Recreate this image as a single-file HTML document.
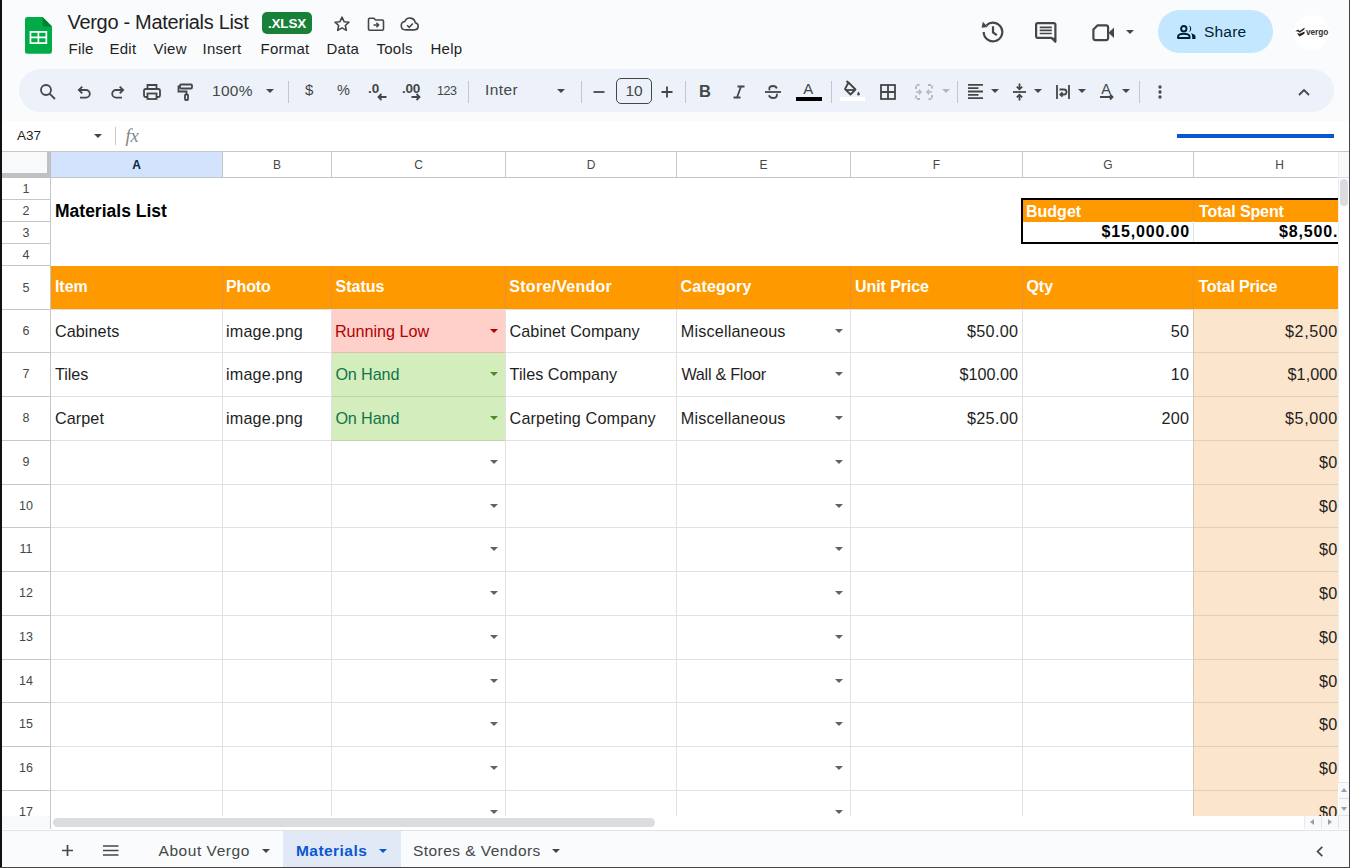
<!DOCTYPE html>
<html lang="en"><head><meta charset="utf-8"><title>Vergo - Materials List</title>
<style>
html,body{margin:0;padding:0}
body{width:1350px;height:868px;overflow:hidden;position:relative;background:#f9fbfd;font-family:"Liberation Sans",sans-serif;color:#1f1f1f}
body *{position:absolute;box-sizing:border-box;white-space:nowrap}
svg{overflow:visible}
/* ---------- header ---------- */
#doctitle{left:67.500px;top:9.700px;font-size:20px;line-height:24px;color:#1f1f1f;letter-spacing:-0.310px}
#badge{left:262px;top:11.700px;width:50px;height:22.700px;border-radius:5px;background:#188038;color:#fff;font-weight:700;font-size:13.500px;line-height:23px;text-align:center;letter-spacing:-0.2px}
.menu{top:39px;font-size:15px;line-height:20px;color:#1f1f1f;letter-spacing:0.250px;margin-left:0.500px}
#share{left:1158px;top:10px;width:115px;height:43px;border-radius:22px;background:#c2e7ff}
#share span{left:46px;top:0;line-height:43px;font-size:15.5px;color:#001d35;letter-spacing:0.2px}
#avatar{left:1294.400px;top:14.800px;width:35px;height:35px;border-radius:50%;background:#fff}
#avatar span{left:11.700px;top:11.800px;font-size:8.300px;line-height:10px;font-weight:700;color:#333;letter-spacing:-0.100px}
/* ---------- toolbar ---------- */
#tb{left:19px;top:69.400px;width:1315px;height:42.600px;border-radius:21.500px;background:#edf2fa}
.sep{top:81px;width:1px;height:22px;background:#c7c7c7}
.tbt{color:#444746;font-size:15px;line-height:20px;top:81px}
/* ---------- formula bar ---------- */
#fb{left:2px;top:121px;width:1347px;height:30px;background:#fff}
#fbline{left:2px;top:151px;width:1347px;height:1px;background:#c7c7c7}
/* ---------- grid ---------- */
#grid{left:0;top:0;width:1350px;height:830px}
#gridbg{left:2px;top:152px;width:1347px;height:678px;background:#fff}
.ch{top:152px;height:25px;line-height:27px;text-align:center;font-size:12px;color:#444746;background:#fff}
.ch.sel{background:#d3e3fd;color:#041e49;font-weight:700}
.rh{left:2px;width:48px;padding-top:0.500px;text-align:center;font-size:12.5px;color:#444746;background:#fff}
.vl{width:1px;background:#e1e1e1}
.hl{height:1px;background:#e1e1e1}
.vl.hd,.hl.hd{background:#c4c7c5}
.orow{background:#ff9900}
.vl.ov{background:#e69138}
.oh{color:#fff;font-weight:700;font-size:16px}
.tint{background:#fce5cd}
.hl.tl{background:#e3cfb9}
.c{font-size:16.200px;color:#1f1f1f}
.c.r{text-align:right}
.sbg.low{background:#ffcfc9}
.sbg.ok{background:#d4edbc}
.hl.lowl{background:#e6bab5}
.hl.okl{background:#bfd5a9}
.c.tlow{color:#b10202}
.c.tok{color:#11734b}
.dd{width:0;height:0;border-left:4px solid transparent;border-right:4px solid transparent;border-top:4.400px solid #5f6368}
.dd.dlow{border-top-color:#b10202}
.dd.dok{border-top-color:#4f8a2a}
.title{font-weight:700;font-size:17.500px;color:#000;margin-top:0.500px}
.bud{left:1021px;top:198px;width:317px;height:46px;overflow:hidden}
.bo{background:#ff9900}
.bt{color:#fff;font-weight:700;font-size:16px;line-height:22px}
.bv{color:#000;font-weight:700;font-size:16px;line-height:22px;letter-spacing:0.85px}
.bsep{width:1px}
.tab{top:840.500px;font-size:15.5px;line-height:20px;color:#444746;letter-spacing:0.45px}
</style></head><body>
<!-- ===== title bar ===== -->
<svg style="left:24.800px;top:17px" width="27" height="36.700" viewBox="0 0 27 36.700">
<path d="M2.500 0H17.600l9.400 9.400V34.200a2.500 2.500 0 0 1-2.500 2.500h-22A2.500 2.500 0 0 1 0 34.200v-31.700A2.500 2.500 0 0 1 2.500 0z" fill="#00ac47"/>
<path d="M17.600 0l9.400 9.400h-7.400a2 2 0 0 1-2-2z" fill="#00832d"/>
<path d="M4.600 14h17.600v13H4.600zM6.300 15.700v3.900h6.250v-3.900zM14.250 15.700v3.900h6.250v-3.900zM6.300 21.300v4h6.250v-4zM14.250 21.300v4h6.250v-4z" fill="#fff" fill-rule="evenodd"/>
</svg>
<div id="doctitle">Vergo - Materials List</div>
<div id="badge">.XLSX</div>
<!-- star -->
<svg style="left:331.700px;top:13.700px" width="20" height="20" viewBox="0 0 24 24"><path d="M12 3.800l2.500 5.400 5.900.600-4.400 4 1.200 5.800L12 16.600 6.800 19.600 8 13.800 3.600 9.800l5.900-.600z" fill="none" stroke="#444746" stroke-width="1.900" stroke-linejoin="round"/></svg>
<!-- move to folder -->
<svg style="left:365.700px;top:13.700px" width="20" height="20" viewBox="0 0 24 24"><path d="M3 6.500a1.500 1.500 0 0 1 1.500-1.500h5l2 2.200h8a1.500 1.500 0 0 1 1.500 1.500V18a1.500 1.500 0 0 1-1.500 1.500h-15A1.500 1.500 0 0 1 3 18z" fill="none" stroke="#444746" stroke-width="1.900" stroke-linejoin="round"/><path d="M9 13.300h5.500M12.500 10.600l2.700 2.700-2.700 2.700" fill="none" stroke="#444746" stroke-width="1.800"/></svg>
<!-- cloud done -->
<svg style="left:398.700px;top:13.700px" width="22" height="20" viewBox="0 0 26 24"><path d="M7.500 19a5 5 0 0 1-.700-9.950A6.500 6.500 0 0 1 19.300 10.500 4.300 4.300 0 0 1 19 19z" fill="none" stroke="#444746" stroke-width="1.900" stroke-linejoin="round"/><path d="M9.500 13.500l2.500 2.500 4.500-4.500" fill="none" stroke="#444746" stroke-width="1.800"/></svg>
<div class="menu" style="left:68px">File</div>
<div class="menu" style="left:109px">Edit</div>
<div class="menu" style="left:153px">View</div>
<div class="menu" style="left:202px">Insert</div>
<div class="menu" style="left:260px">Format</div>
<div class="menu" style="left:326px">Data</div>
<div class="menu" style="left:376px">Tools</div>
<div class="menu" style="left:430px">Help</div>
<!-- history -->
<svg style="left:979px;top:18.400px" width="28" height="28" viewBox="0 0 28 28"><path d="M4.700 14a9.300 9.300 0 1 0 2.800-6.650" fill="none" stroke="#444746" stroke-width="2.200"/><path d="M2.600 9.800l1.200-6 5 5.300z" fill="#444746"/><path d="M14 8.300v6.200l3.800 2.600" fill="none" stroke="#444746" stroke-width="2.200"/></svg>
<!-- comment -->
<svg style="left:1034.500px;top:22px" width="21.500" height="21" viewBox="0 0 21.500 21"><path d="M1.100 2.600A1.500 1.500 0 0 1 2.600 1.100h16.300A1.500 1.500 0 0 1 20.400 2.600v17.200l-4-4H2.600A1.500 1.500 0 0 1 1.100 14.300z" fill="none" stroke="#444746" stroke-width="2.200" stroke-linejoin="round"/><path d="M16.400 15.800l4 4v-4z" fill="#444746"/><path d="M4.700 5.300h12.100M4.700 8.400h12.100M4.700 11.500h12.100" stroke="#444746" stroke-width="1.700"/></svg>
<!-- camera -->
<svg style="left:1091px;top:23px" width="24" height="19" viewBox="0 0 24 19"><path d="M2.400 6.500l4-4.100h8.700a2 2 0 0 1 2 2v10.700a2 2 0 0 1-2 2H4.400a2 2 0 0 1-2-2z" fill="none" stroke="#444746" stroke-width="2.200" stroke-linejoin="round"/><path d="M17.500 9.800l5.500-5.300v10.600z" fill="#444746"/></svg>
<div class="dd" style="left:1126px;top:30px;border-top-color:#444746;border-left-width:4px;border-right-width:4px;border-top-width:4.500px"></div>
<div id="share"><svg style="left:18.500px;top:14.500px" width="19" height="14" viewBox="0 0 19 14"><circle cx="6.800" cy="3.700" r="2.700" fill="none" stroke="#001d35" stroke-width="1.900"/><path d="M1 13v-1.300c0-1.900 3.200-3 5.800-3s5.800 1.100 5.800 3V13z" fill="none" stroke="#001d35" stroke-width="1.900" stroke-linejoin="round"/><path d="M11.600 0.300a3.500 3.500 0 0 1 0 6.800 4.500 4.500 0 0 0 0-6.800zM14 8.300c2.300.500 4.500 1.500 4.500 3.300V14h-3.300v-2.300c0-1.400-.400-2.500-1.200-3.400z" fill="#001d35"/></svg><span>Share</span></div>
<div id="avatar"><svg style="left:0.500px;top:12.500px" width="10.500" height="10" viewBox="0 0 10.500 10"><path d="M0.300 4.200L3.200 2.600l1.500 1.500L9.700 0.400 9.300 2.600 4.800 5.700 3 4.500zM1.800 6.200l2.800.600L9.700 4.500 9.400 6.700 4.600 9.500z" fill="#222"/></svg><span>vergo</span></div>
<!-- ===== toolbar ===== -->
<div id="tb"></div>
<svg style="left:38px;top:81.6px" width="20" height="20" viewBox="0 0 20 20"><circle cx="8" cy="8" r="5" fill="none" stroke="#444746" stroke-width="1.8"/><path d="M11.800 11.800l5.200 5.200" fill="none" stroke="#444746" stroke-width="1.8" stroke-width="2"/></svg>
<svg style="left:74px;top:81.6px" width="20" height="20" viewBox="0 0 20 20"><path d="M5.500 8h6.500a3.800 3.800 0 0 1 0 7.600H6" fill="none" stroke="#444746" stroke-width="1.8"/><path d="M8.300 4.600L4.800 8l3.500 3.400" fill="none" stroke="#444746" stroke-width="1.8"/></svg>
<svg style="left:108px;top:81.6px" width="20" height="20" viewBox="0 0 20 20"><path d="M14.500 8H8a3.800 3.800 0 0 0 0 7.600h6" fill="none" stroke="#444746" stroke-width="1.8"/><path d="M11.700 4.600L15.200 8l-3.500 3.400" fill="none" stroke="#444746" stroke-width="1.8"/></svg>
<svg style="left:142px;top:81.6px" width="20" height="20" viewBox="0 0 20 20"><path d="M5.500 7V3h9v4" fill="none" stroke="#444746" stroke-width="1.8"/><rect x="2" y="7" width="16" height="8" rx="1.500" fill="none" stroke="#444746" stroke-width="1.8"/><rect x="5.500" y="11.500" width="9" height="5.500" fill="#edf2fa" stroke="#444746" stroke-width="1.800"/></svg>
<svg style="left:176px;top:81.6px" width="20" height="20" viewBox="0 0 20 20"><rect x="4" y="2.500" width="12" height="4" rx="1" fill="none" stroke="#444746" stroke-width="1.8"/><path d="M4 4.500H2.500v5h8v3" fill="none" stroke="#444746" stroke-width="1.8"/><rect x="9" y="12.500" width="3" height="5.500" rx="0.800" fill="none" stroke="#444746" stroke-width="1.8" stroke-width="1.600"/></svg>
<div class="tbt" style="left:212px;font-size:15.5px;letter-spacing:0.3px">100%</div>
<div class="dd" style="left:265.5px;top:89px;border-top-color:#444746"></div>
<div class="sep" style="left:288px"></div>
<div class="tbt" style="left:305px;top:80px;font-size:15px">$</div>
<div class="tbt" style="left:337px;top:80px;font-size:14.5px">%</div>
<div class="tbt" style="left:368px;top:78.500px;font-size:13.5px;font-weight:700">.0</div>
<svg style="left:377px;top:92.6px" width="10" height="8" viewBox="0 0 10 8"><path d="M9.500 4H1.500M4.500 1L1.500 4l3 3" fill="none" stroke="#444746" stroke-width="1.8" stroke-width="1.600"/></svg>
<div class="tbt" style="left:402px;top:78.500px;font-size:13.5px;font-weight:700;letter-spacing:-0.3px">.00</div>
<svg style="left:411px;top:92.6px" width="10" height="8" viewBox="0 0 10 8"><path d="M0.500 4H8.500M5.500 1L8.500 4l-3 3" fill="none" stroke="#444746" stroke-width="1.8" stroke-width="1.600"/></svg>
<div class="tbt" style="left:437px;font-size:12.500px;letter-spacing:-0.500px">123</div>
<div class="sep" style="left:468px"></div>
<div class="tbt" style="left:485px;top:80px;font-size:15.5px;letter-spacing:0.4px">Inter</div>
<div class="dd" style="left:556.5px;top:89px;border-top-color:#444746"></div>
<div class="sep" style="left:581px"></div>
<svg style="left:593px;top:85.6px" width="12" height="12" viewBox="0 0 12 12"><path d="M0.500 6h11" fill="none" stroke="#444746" stroke-width="1.8"/></svg>
<div style="left:616px;top:78px;width:36px;height:26px;border:1px solid #444746;border-radius:5px"></div>
<div class="tbt" style="left:616px;width:36px;text-align:center;top:81px;font-size:15.500px">10</div>
<svg style="left:661px;top:85.6px" width="12" height="12" viewBox="0 0 12 12"><path d="M0.500 6h11M6 0.500v11" fill="none" stroke="#444746" stroke-width="1.8"/></svg>
<div class="sep" style="left:685px"></div>
<div class="tbt" style="left:699px;top:80px;font-size:16.500px;font-weight:700;line-height:22px">B</div>
<svg style="left:732px;top:84.6px" width="14" height="14" viewBox="0 0 14 14"><path d="M5.500 1.500h7M1.500 12.500h7M9 1.500l-4 11" fill="none" stroke="#444746" stroke-width="1.8" stroke-width="2"/></svg>
<svg style="left:763px;top:81.6px" width="20" height="20" viewBox="0 0 20 20"><path d="M2 10h16" fill="none" stroke="#444746" stroke-width="1.8" stroke-width="1.600"/><path d="M13.800 6.500C13.300 4.800 11.800 4 10 4 7.800 4 6.300 5.200 6.300 6.800c0 .600.200 1.100.500 1.500M6 13.200c.400 1.700 2 2.800 4 2.800 2.300 0 3.900-1.200 3.900-3 0-.500-.100-.900-.300-1.200" fill="none" stroke="#444746" stroke-width="1.8"/></svg>
<div class="tbt" style="left:803.300px;top:79px;font-size:15px;line-height:20px">A</div>
<div style="left:796px;top:97px;width:26px;height:4px;background:#000"></div>
<div class="sep" style="left:831px"></div>
<svg style="left:841.7px;top:79.6px" width="20" height="18" viewBox="0 0 20 18"><path d="M6.500 2.500l7 7-5 5-5.500-5.500z" fill="none" stroke="#444746" stroke-width="1.8" stroke-linejoin="round"/><path d="M4 10h9" fill="none" stroke="#444746" stroke-width="1.8"/><path d="M4.500 1l2.500 2.500" fill="none" stroke="#444746" stroke-width="1.8"/><path d="M16.500 11.500c.800 1.200 1.300 2 1.300 2.700a1.300 1.300 0 0 1-2.600 0c0-.700.500-1.500 1.300-2.700z" fill="#444746"/></svg>
<div style="left:840px;top:97px;width:25px;height:4px;background:#fff"></div>
<svg style="left:880px;top:83.6px" width="16" height="16" viewBox="0 0 16 16"><rect x="1" y="1" width="14" height="14" fill="none" stroke="#444746" stroke-width="1.8"/><path d="M8 1v14M1 8h14" fill="none" stroke="#444746" stroke-width="1.8"/></svg>
<svg style="left:915px;top:83.6px" width="18" height="16" viewBox="0 0 18 16"><path d="M1 5V1h4M13 1h4v4M17 11v4h-4M5 15H1v-4" fill="none" stroke="#b4b7ba" stroke-width="1.800" stroke-dasharray="3 1.500"/><path d="M1 8h5M3.800 5.800L6 8l-2.200 2.200M17 8h-5M14.200 5.800L12 8l2.200 2.200" fill="none" stroke="#b4b7ba" stroke-width="1.600"/></svg>
<div class="dd" style="left:941.5px;top:89px;border-top-color:#b4b7ba"></div>
<div class="sep" style="left:957px"></div>
<svg style="left:967.8px;top:83.7px" width="15" height="15" viewBox="0 0 15 15"><path d="M0 0.800h15M0 4.150h10.500M0 7.500h15M0 10.850h10.500M0 14.200h15" fill="none" stroke="#444746" stroke-width="1.8" stroke-width="1.500"/></svg>
<div class="dd" style="left:990.5px;top:89px;border-top-color:#444746"></div>
<svg style="left:1012.8px;top:82.6px" width="13" height="18" viewBox="0 0 13 18"><path d="M0 9h13" fill="none" stroke="#444746" stroke-width="1.8" stroke-width="1.600"/><path d="M6.500 0.500v5.500M3.800 3.600L6.500 6.300l2.700-2.700M6.500 17.500v-5.500M3.800 14.400L6.500 11.700l2.700 2.700" fill="none" stroke="#444746" stroke-width="1.8" stroke-width="1.600"/></svg>
<div class="dd" style="left:1033.5px;top:89px;border-top-color:#444746"></div>
<svg style="left:1056px;top:84.6px" width="14" height="14" viewBox="0 0 14 14"><path d="M1 0v14M13 0v14" fill="none" stroke="#444746" stroke-width="1.8" stroke-width="1.700"/><path d="M3.500 4.500h4.500a2.500 2.500 0 0 1 0 5H4.500M6.500 7.300L4.300 9.500l2.200 2.200" fill="none" stroke="#444746" stroke-width="1.8" stroke-width="1.500"/></svg>
<div class="dd" style="left:1077.5px;top:89px;border-top-color:#444746"></div>
<div class="tbt" style="left:1101.200px;top:79px;font-size:14.500px;line-height:20px">A</div>
<svg style="left:1100px;top:93.6px" width="14" height="6" viewBox="0 0 14 6"><path d="M0 3h12.500M10 0.500L12.500 3l-2.500 2.500" fill="none" stroke="#444746" stroke-width="1.8" stroke-width="1.500"/></svg>
<div class="dd" style="left:1121.5px;top:89px;border-top-color:#444746"></div>
<div class="sep" style="left:1139px"></div>
<svg style="left:1158.3px;top:85px" width="4" height="14" viewBox="0 0 4 14"><circle cx="2" cy="2" r="1.650" fill="#444746"/><circle cx="2" cy="7" r="1.650" fill="#444746"/><circle cx="2" cy="12" r="1.650" fill="#444746"/></svg>
<svg style="left:1297.8px;top:87.8px" width="12" height="8" viewBox="0 0 12 8"><path d="M1 7l5-5 5 5" fill="none" stroke="#444746" stroke-width="1.8" stroke-width="1.900"/></svg>
<!-- ===== formula bar ===== -->
<div id="fb"></div><div id="fbline"></div>
<div style="left:17px;top:125.500px;font-size:13.500px;line-height:20px;color:#1f1f1f">A37</div>
<div class="dd" style="left:93.500px;top:134px;border-top-color:#444746;border-left-width:4.500px;border-right-width:4.500px;border-top-width:4.500px"></div>
<div style="left:115px;top:127px;width:1px;height:18px;background:#c7c7c7"></div>
<div style="left:125.500px;top:125px;font-family:'Liberation Serif',serif;font-style:italic;font-size:18.500px;line-height:22px;color:#80868b;letter-spacing:-0.200px">fx</div>
<div style="left:1177px;top:133.800px;width:157px;height:4.200px;background:#0b57d0"></div>
<div id="gridbg"></div>
<!-- corner -->
<div style="left:2px;top:152px;width:48px;height:25px;background:#f8f9fa"></div>
<div style="left:47px;top:152px;width:4px;height:26px;background:#bdc1c6"></div>
<div style="left:2px;top:173px;width:49px;height:5px;background:#bdc1c6"></div>
<div class="hl hd" style="left:51px;top:177px;width:1287px"></div>
<div class="vl hd" style="left:50px;top:178px;height:651px"></div>
<div id="grid">
<div class="ch sel" style="left:51px;width:171px">A</div>
<div class="vl hd" style="left:222px;top:152px;height:25px"></div>
<div class="ch" style="left:223px;width:108px">B</div>
<div class="vl hd" style="left:331px;top:152px;height:25px"></div>
<div class="ch" style="left:332px;width:173px">C</div>
<div class="vl hd" style="left:505px;top:152px;height:25px"></div>
<div class="ch" style="left:506px;width:170px">D</div>
<div class="vl hd" style="left:676px;top:152px;height:25px"></div>
<div class="ch" style="left:677px;width:173px">E</div>
<div class="vl hd" style="left:850px;top:152px;height:25px"></div>
<div class="ch" style="left:851px;width:171px">F</div>
<div class="vl hd" style="left:1022px;top:152px;height:25px"></div>
<div class="ch" style="left:1023px;width:170px">G</div>
<div class="vl hd" style="left:1193px;top:152px;height:25px"></div>
<div class="ch" style="left:1194px;width:171px">H</div>
<div class="vl hd" style="left:1365px;top:152px;height:25px"></div>
<div class="rh" style="top:178px;height:21px;line-height:21px">1</div>
<div class="hl hd" style="top:199px;left:2px;width:48px"></div>
<div class="rh" style="top:200px;height:21px;line-height:21px">2</div>
<div class="hl hd" style="top:221px;left:2px;width:48px"></div>
<div class="rh" style="top:222px;height:21px;line-height:21px">3</div>
<div class="hl hd" style="top:243px;left:2px;width:48px"></div>
<div class="rh" style="top:244px;height:21px;line-height:21px">4</div>
<div class="hl hd" style="top:265px;left:2px;width:48px"></div>
<div class="rh" style="top:266px;height:43px;line-height:43px">5</div>
<div class="hl hd" style="top:309px;left:2px;width:48px"></div>
<div class="rh" style="top:310px;height:42px;line-height:40px">6</div>
<div class="hl hd" style="top:352px;left:2px;width:48px"></div>
<div class="rh" style="top:353px;height:43px;line-height:41px">7</div>
<div class="hl hd" style="top:396px;left:2px;width:48px"></div>
<div class="rh" style="top:397px;height:43px;line-height:41px">8</div>
<div class="hl hd" style="top:440px;left:2px;width:48px"></div>
<div class="rh" style="top:441px;height:43px;line-height:41px">9</div>
<div class="hl hd" style="top:484px;left:2px;width:48px"></div>
<div class="rh" style="top:485px;height:42px;line-height:40px">10</div>
<div class="hl hd" style="top:527px;left:2px;width:48px"></div>
<div class="rh" style="top:528px;height:43px;line-height:41px">11</div>
<div class="hl hd" style="top:571px;left:2px;width:48px"></div>
<div class="rh" style="top:572px;height:43px;line-height:41px">12</div>
<div class="hl hd" style="top:615px;left:2px;width:48px"></div>
<div class="rh" style="top:616px;height:43px;line-height:41px">13</div>
<div class="hl hd" style="top:659px;left:2px;width:48px"></div>
<div class="rh" style="top:660px;height:42px;line-height:40px">14</div>
<div class="hl hd" style="top:702px;left:2px;width:48px"></div>
<div class="rh" style="top:703px;height:43px;line-height:41px">15</div>
<div class="hl hd" style="top:746px;left:2px;width:48px"></div>
<div class="rh" style="top:747px;height:43px;line-height:41px">16</div>
<div class="hl hd" style="top:790px;left:2px;width:48px"></div>
<div class="rh" style="top:791px;height:43px;line-height:41px">17</div>
<div class="hl hd" style="top:834px;left:2px;width:48px"></div>
<div class="hl" style="top:309px;left:51px;width:1287px"></div>
<div class="hl" style="top:352px;left:51px;width:1287px"></div>
<div class="hl" style="top:396px;left:51px;width:1287px"></div>
<div class="hl" style="top:440px;left:51px;width:1287px"></div>
<div class="hl" style="top:484px;left:51px;width:1287px"></div>
<div class="hl" style="top:527px;left:51px;width:1287px"></div>
<div class="hl" style="top:571px;left:51px;width:1287px"></div>
<div class="hl" style="top:615px;left:51px;width:1287px"></div>
<div class="hl" style="top:659px;left:51px;width:1287px"></div>
<div class="hl" style="top:702px;left:51px;width:1287px"></div>
<div class="hl" style="top:746px;left:51px;width:1287px"></div>
<div class="hl" style="top:790px;left:51px;width:1287px"></div>
<div class="hl" style="top:834px;left:51px;width:1287px"></div>
<div class="vl" style="left:222px;top:309px;height:520px"></div>
<div class="vl" style="left:331px;top:309px;height:520px"></div>
<div class="vl" style="left:505px;top:309px;height:520px"></div>
<div class="vl" style="left:676px;top:309px;height:520px"></div>
<div class="vl" style="left:850px;top:309px;height:520px"></div>
<div class="vl" style="left:1022px;top:309px;height:520px"></div>
<div class="vl" style="left:1193px;top:309px;height:520px;background:#dcc8b3"></div>
<div class="orow" style="top:266px;height:43px;left:51px;width:1287px"></div>
<div class="oh" style="left:54.9px;top:265px;height:44px;line-height:44px;letter-spacing:0px">Item</div>
<div class="oh" style="left:225.9px;top:265px;height:44px;line-height:44px;letter-spacing:-0.1px">Photo</div>
<div class="vl ov" style="left:222px;top:266px;height:43px"></div>
<div class="oh" style="left:335.5px;top:265px;height:44px;line-height:44px;letter-spacing:0px">Status</div>
<div class="vl ov" style="left:331px;top:266px;height:43px"></div>
<div class="oh" style="left:509.3px;top:265px;height:44px;line-height:44px;letter-spacing:0.27px">Store/Vendor</div>
<div class="vl ov" style="left:505px;top:266px;height:43px"></div>
<div class="oh" style="left:680.6px;top:265px;height:44px;line-height:44px;letter-spacing:0.2px">Category</div>
<div class="vl ov" style="left:676px;top:266px;height:43px"></div>
<div class="oh" style="left:855.1px;top:265px;height:44px;line-height:44px;letter-spacing:-0.1px">Unit Price</div>
<div class="vl ov" style="left:850px;top:266px;height:43px"></div>
<div class="oh" style="left:1026.4px;top:265px;height:44px;line-height:44px;letter-spacing:0px">Qty</div>
<div class="vl ov" style="left:1022px;top:266px;height:43px"></div>
<div class="oh" style="left:1198.4px;top:265px;height:44px;line-height:44px;letter-spacing:-0.15px">Total Price</div>
<div class="vl ov" style="left:1193px;top:266px;height:43px"></div>
<div class="tint" style="left:1194px;top:309px;width:144px;height:520px"></div>
<div class="hl tl" style="top:352px;left:1194px;width:144px"></div>
<div class="hl tl" style="top:396px;left:1194px;width:144px"></div>
<div class="hl tl" style="top:440px;left:1194px;width:144px"></div>
<div class="hl tl" style="top:484px;left:1194px;width:144px"></div>
<div class="hl tl" style="top:527px;left:1194px;width:144px"></div>
<div class="hl tl" style="top:571px;left:1194px;width:144px"></div>
<div class="hl tl" style="top:615px;left:1194px;width:144px"></div>
<div class="hl tl" style="top:659px;left:1194px;width:144px"></div>
<div class="hl tl" style="top:702px;left:1194px;width:144px"></div>
<div class="hl tl" style="top:746px;left:1194px;width:144px"></div>
<div class="hl tl" style="top:790px;left:1194px;width:144px"></div>
<div class="hl tl" style="top:834px;left:1194px;width:144px"></div>
<div class="sbg low" style="left:332px;width:173px;top:310px;height:42px"></div>
<div class="hl lowl" style="left:332px;width:173px;top:352px"></div>
<div class="c" style="left:54.9px;top:309.5px;height:42px;line-height:42px;letter-spacing:0.08px">Cabinets</div>
<div class="c" style="left:226px;top:309.5px;height:42px;line-height:42px;letter-spacing:0.16px">image.png</div>
<div class="c tlow" style="left:334.9px;top:309.5px;height:42px;line-height:42px;letter-spacing:-0.03px">Running Low</div>
<div class="c" style="left:509.6px;top:309.5px;height:42px;line-height:42px;letter-spacing:0.03px">Cabinet Company</div>
<div class="c" style="left:680.8px;top:309.5px;height:42px;line-height:42px;letter-spacing:0.17px">Miscellaneous</div>
<div class="c r" style="right:331.7px;top:309.5px;height:42px;line-height:42px;letter-spacing:0.3px">$50.00</div>
<div class="c r" style="right:160.7px;top:309.5px;height:42px;line-height:42px;letter-spacing:0.3px">50</div>
<div class="c r" style="right:12.15px;top:309.5px;height:42px;line-height:42px;letter-spacing:0.55px">$2,500</div>
<div class="dd dlow" style="left:490.300px;top:328.6px"></div>
<div class="dd" style="left:835.300px;top:328.6px"></div>
<div class="sbg ok" style="left:332px;width:173px;top:353px;height:43px"></div>
<div class="hl okl" style="left:332px;width:173px;top:396px"></div>
<div class="c" style="left:54.9px;top:352.5px;height:43px;line-height:43px;letter-spacing:-0.03px">Tiles</div>
<div class="c" style="left:226px;top:352.5px;height:43px;line-height:43px;letter-spacing:0.16px">image.png</div>
<div class="c tok" style="left:335.4px;top:352.5px;height:43px;line-height:43px;letter-spacing:-0.12px">On Hand</div>
<div class="c" style="left:509.6px;top:352.5px;height:43px;line-height:43px;letter-spacing:0.02px">Tiles Company</div>
<div class="c" style="left:681.4px;top:352.5px;height:43px;line-height:43px;letter-spacing:-0.26px">Wall &amp; Floor</div>
<div class="c r" style="right:332px;top:352.5px;height:43px;line-height:43px;letter-spacing:0px">$100.00</div>
<div class="c r" style="right:160.7px;top:352.5px;height:43px;line-height:43px;letter-spacing:0.3px">10</div>
<div class="c r" style="right:12.65px;top:352.5px;height:43px;line-height:43px;letter-spacing:0.05px">$1,000</div>
<div class="dd dok" style="left:490.300px;top:371.6px"></div>
<div class="dd" style="left:835.300px;top:371.6px"></div>
<div class="sbg ok" style="left:332px;width:173px;top:397px;height:43px"></div>
<div class="hl okl" style="left:332px;width:173px;top:440px"></div>
<div class="c" style="left:54.9px;top:396.5px;height:43px;line-height:43px;letter-spacing:0.09px">Carpet</div>
<div class="c" style="left:226px;top:396.5px;height:43px;line-height:43px;letter-spacing:0.16px">image.png</div>
<div class="c tok" style="left:335.4px;top:396.5px;height:43px;line-height:43px;letter-spacing:-0.12px">On Hand</div>
<div class="c" style="left:509.6px;top:396.5px;height:43px;line-height:43px;letter-spacing:0.13px">Carpeting Company</div>
<div class="c" style="left:680.8px;top:396.5px;height:43px;line-height:43px;letter-spacing:0.17px">Miscellaneous</div>
<div class="c r" style="right:331.7px;top:396.5px;height:43px;line-height:43px;letter-spacing:0.3px">$25.00</div>
<div class="c r" style="right:160.8px;top:396.5px;height:43px;line-height:43px;letter-spacing:0.2px">200</div>
<div class="c r" style="right:12.15px;top:396.5px;height:43px;line-height:43px;letter-spacing:0.55px">$5,000</div>
<div class="dd dok" style="left:490.300px;top:415.6px"></div>
<div class="dd" style="left:835.300px;top:415.6px"></div>
<div class="c r" style="right:12.4px;top:440.5px;height:43px;line-height:43px;letter-spacing:0.3px">$0</div>
<div class="dd" style="left:490.300px;top:459.6px"></div>
<div class="dd" style="left:835.300px;top:459.6px"></div>
<div class="c r" style="right:12.4px;top:484.5px;height:42px;line-height:42px;letter-spacing:0.3px">$0</div>
<div class="dd" style="left:490.300px;top:503.6px"></div>
<div class="dd" style="left:835.300px;top:503.6px"></div>
<div class="c r" style="right:12.4px;top:527.5px;height:43px;line-height:43px;letter-spacing:0.3px">$0</div>
<div class="dd" style="left:490.300px;top:546.6px"></div>
<div class="dd" style="left:835.300px;top:546.6px"></div>
<div class="c r" style="right:12.4px;top:571.5px;height:43px;line-height:43px;letter-spacing:0.3px">$0</div>
<div class="dd" style="left:490.300px;top:590.6px"></div>
<div class="dd" style="left:835.300px;top:590.6px"></div>
<div class="c r" style="right:12.4px;top:615.5px;height:43px;line-height:43px;letter-spacing:0.3px">$0</div>
<div class="dd" style="left:490.300px;top:634.6px"></div>
<div class="dd" style="left:835.300px;top:634.6px"></div>
<div class="c r" style="right:12.4px;top:659.5px;height:42px;line-height:42px;letter-spacing:0.3px">$0</div>
<div class="dd" style="left:490.300px;top:678.6px"></div>
<div class="dd" style="left:835.300px;top:678.6px"></div>
<div class="c r" style="right:12.4px;top:702.5px;height:43px;line-height:43px;letter-spacing:0.3px">$0</div>
<div class="dd" style="left:490.300px;top:721.6px"></div>
<div class="dd" style="left:835.300px;top:721.6px"></div>
<div class="c r" style="right:12.4px;top:746.5px;height:43px;line-height:43px;letter-spacing:0.3px">$0</div>
<div class="dd" style="left:490.300px;top:765.6px"></div>
<div class="dd" style="left:835.300px;top:765.6px"></div>
<div class="c r" style="right:12.4px;top:790.5px;height:43px;line-height:43px;letter-spacing:0.3px">$0</div>
<div class="dd" style="left:490.300px;top:809.6px"></div>
<div class="dd" style="left:835.300px;top:809.6px"></div>
<div class="title" style="left:55px;top:199px;height:22px;line-height:22px">Materials List</div>
<div class="bud"><div class="bo" style="left:0;top:0;width:330px;height:46px;background:#000"></div><div class="bo" style="left:2px;top:2px;width:328px;height:21.700px"></div><div class="bo" style="left:2px;top:23.700px;width:328px;height:20.300px;background:#fff"></div><div class="bsep" style="left:172px;top:2px;height:21px;background:#e69138"></div><div class="bsep" style="left:172px;top:23px;height:21px;background:#e1e1e1"></div><div class="bt" style="left:5px;top:2.500px">Budget</div><div class="bt" style="left:178px;top:2.500px;letter-spacing:-0.1px">Total Spent</div><div class="bv" style="right:148px;top:23px">$15,000.00</div><div class="bv" style="left:258px;top:23px">$8,500.00</div></div>
</div><!-- ===== bottom ===== -->
<div style="left:2px;top:816px;width:1336px;height:14px;background:#fff"></div>
<div style="left:2px;top:816px;width:48px;height:13px;background:#f8f9fa"></div>
<div style="left:50px;top:816px;width:1px;height:13px;background:#c4c7c5"></div>
<div style="left:53px;top:818px;width:602px;height:9px;border-radius:5px;background:#dadce0"></div>
<!-- right scrollbar -->
<div style="left:1338px;top:152px;width:11px;height:678px;background:#fff"></div>
<div style="left:1338px;top:152px;width:1px;height:631px;background:#eceded"></div>
<div style="left:1339px;top:152px;width:10px;height:25px;background:#f8f9fa"></div>
<div style="left:1339px;top:177px;width:10px;height:1px;background:#d3dcef"></div>
<div style="left:1339.800px;top:179.200px;width:8.500px;height:26.700px;border-radius:4.200px;background:#dadce0"></div>
<div style="left:1339px;top:782px;width:10px;height:34px;background:#f8f9fa"></div>
<div style="left:1338px;top:782px;width:11px;height:1px;background:#e4e5e7"></div>
<div style="left:1339px;top:798px;width:10px;height:1px;background:#d9e2f3"></div>
<div style="left:1338px;top:815px;width:11px;height:1px;background:#e4e5e7"></div>
<div class="dd" style="left:1340.900px;top:787.700px;border-left-width:3.500px;border-right-width:3.500px;border-top:0;border-bottom:4px solid #9aa0a6"></div>
<div class="dd" style="left:1340.900px;top:806.500px;border-left-width:3.500px;border-right-width:3.500px;border-top:4px solid #9aa0a6"></div>
<div style="left:1304px;top:816px;width:35px;height:13px;background:#f8f9fa;border-left:1px solid #e8e9eb"></div>
<div style="left:1321px;top:816px;width:1px;height:13px;background:#e4e5e7"></div>
<div style="left:1338px;top:816px;width:1px;height:13px;background:#e4e5e7"></div>
<div style="left:1339px;top:816px;width:10px;height:13px;background:#f8f9fa"></div>
<div class="dd" style="left:1310.400px;top:818.600px;border:0;border-top:3.500px solid transparent;border-bottom:3.500px solid transparent;border-right:4px solid #9aa0a6"></div>
<div class="dd" style="left:1328.400px;top:818.600px;border:0;border-top:3.500px solid transparent;border-bottom:3.500px solid transparent;border-left:4px solid #9aa0a6"></div>
<!-- tab bar -->
<div style="left:2px;top:830px;width:1347px;height:1px;background:#e1e3e6"></div>
<div style="left:2px;top:831px;width:1347px;height:37px;background:#f9fbfd"></div>
<svg style="left:62.200px;top:844.700px" width="11" height="11" viewBox="0 0 11 11"><path d="M0 5.500h11M5.500 0v11" stroke="#444746" stroke-width="1.700" fill="none"/></svg>
<svg style="left:102.700px;top:845px" width="15.500" height="11" viewBox="0 0 15.500 11"><path d="M0 1h15.500M0 5.500h15.500M0 10h15.500" stroke="#444746" stroke-width="1.700" fill="none"/></svg>
<div style="left:282.600px;top:831px;width:118.500px;height:37px;background:#e1e9f7"></div>
<div class="tab" style="left:158.500px;letter-spacing:0.550px">About Vergo</div>
<div class="dd" style="left:261.500px;top:849px;border-top-color:#444746;border-left-width:4px;border-right-width:4px;border-top-width:4.500px"></div>
<div class="tab" style="left:296px;color:#0b57d0;font-weight:700;letter-spacing:0.450px">Materials</div>
<div class="dd" style="left:378.500px;top:849px;border-top-color:#0b57d0;border-left-width:4px;border-right-width:4px;border-top-width:4.500px"></div>
<div class="tab" style="left:413px">Stores &amp; Vendors</div>
<div class="dd" style="left:551.500px;top:849px;border-top-color:#444746;border-left-width:4px;border-right-width:4px;border-top-width:4.500px"></div>
<svg style="left:1315.800px;top:846.300px" width="7.500" height="11" viewBox="0 0 7.500 11"><path d="M6.300 0.900L1.600 5.500l4.700 4.600" stroke="#444746" stroke-width="1.700" fill="none"/></svg>
<!-- window edges -->
<div style="left:0;top:0;width:2px;height:868px;background:#111"></div>
<div style="left:1349px;top:0;width:1px;height:868px;background:#444"></div>
<div style="left:0;top:867px;width:1350px;height:1px;background:#444"></div>
</body></html>
